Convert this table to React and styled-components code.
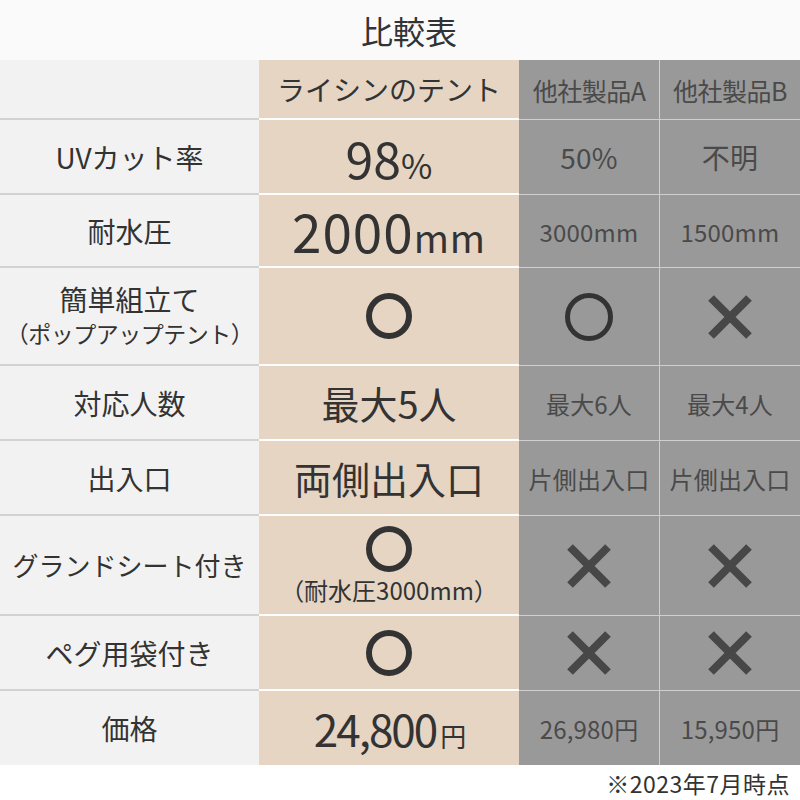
import React from 'react';
import styled, { createGlobalStyle, css } from 'styled-components';

const GlobalStyle = createGlobalStyle`
  body {
    margin: 0;
    background: #fff;
    font-family: "Noto Sans CJK JP", "Noto Sans", sans-serif;
    color: #333;
  }
`;

const rows = [
  {
    label: ['UVカット率'],
    main: { type: 'big', num: '98', unit: '%' },
    a: { type: 'text', text: '50%', size: 28 },
    b: { type: 'text', text: '不明', size: 28 },
    h: 75,
  },
  {
    label: ['耐水圧'],
    main: { type: 'big', num: '2000', unit: 'mm', wide: true },
    a: { type: 'text', text: '3000mm' },
    b: { type: 'text', text: '1500mm' },
    h: 73,
  },
  {
    label: ['簡単組立て', '（ポップアップテント）'],
    main: { type: 'circle' },
    a: { type: 'circle' },
    b: { type: 'cross' },
    h: 98,
  },
  {
    label: ['対応人数'],
    main: { type: 'text', text: '最大5人' },
    a: { type: 'text', text: '最大6人' },
    b: { type: 'text', text: '最大4人' },
    h: 75,
  },
  {
    label: ['出入口'],
    main: { type: 'text', text: '両側出入口' },
    a: { type: 'text', text: '片側出入口' },
    b: { type: 'text', text: '片側出入口' },
    h: 75,
  },
  {
    label: ['グランドシート付き'],
    main: { type: 'circle', note: '（耐水圧3000mm）' },
    a: { type: 'cross' },
    b: { type: 'cross' },
    h: 100,
    small: true,
  },
  {
    label: ['ペグ用袋付き'],
    main: { type: 'circle' },
    a: { type: 'cross' },
    b: { type: 'cross' },
    h: 75,
  },
  {
    label: ['価格'],
    main: { type: 'big', num: '24,800', unit: '円', price: true },
    a: { type: 'text', text: '26,980円' },
    b: { type: 'text', text: '15,950円' },
    h: 74,
  },
];

function Circle({ size = 46, stroke = 6 }) {
  const r = (size - stroke) / 2;
  return (
    <svg width={size} height={size} viewBox={`0 0 ${size} ${size}`}>
      <circle cx={size / 2} cy={size / 2} r={r} fill="none" stroke="#333" strokeWidth={stroke} />
    </svg>
  );
}

function Cross() {
  return (
    <svg width="46" height="46" viewBox="0 0 46 46">
      <path d="M4 4 L42 42 M42 4 L4 42" stroke="#474747" strokeWidth="8" />
    </svg>
  );
}

function MainValue({ v }) {
  if (v.type === 'circle') {
    return (
      <Stack>
        <Circle size={46} stroke={6} />
        {v.note && <Note>{v.note}</Note>}
      </Stack>
    );
  }
  if (v.type === 'big') {
    return (
      <Big $price={v.price} $wide={v.wide}>
        {v.num}
        <Unit $price={v.price} $wide={v.wide}>
          {v.unit}
        </Unit>
      </Big>
    );
  }
  return <MainText>{v.text}</MainText>;
}

function OtherValue({ v }) {
  if (v.type === 'circle') return <Circle size={48} stroke={5} />;
  if (v.type === 'cross') return <Cross />;
  return <OtherText $size={v.size}>{v.text}</OtherText>;
}

export default function App() {
  const heights = [60, ...rows.map((r) => r.h)].map((h) => `${h}px`).join(' ');
  return (
    <Page>
      <GlobalStyle />
      <Title>比較表</Title>
      <Table style={{ gridTemplateRows: heights }}>
        <Cell $col="label" />
        <Cell $col="main">
          <MainHead>ライシンのテント</MainHead>
        </Cell>
        <Cell $col="a">
          <OtherHead>他社製品A</OtherHead>
        </Cell>
        <Cell $col="b">
          <OtherHead>他社製品B</OtherHead>
        </Cell>
        {rows.map((row, i) => {
          const last = i === rows.length - 1;
          return (
            <React.Fragment key={row.label[0]}>
              <Cell $col="label" $last={last}>
                <Label $small={row.small}>
                  {row.label.map((l, j) => (
                    <LabelLine key={l} $sub={j > 0}>
                      {l}
                    </LabelLine>
                  ))}
                </Label>
              </Cell>
              <Cell $col="main" $last={last}>
                <MainValue v={row.main} />
              </Cell>
              <Cell $col="a" $last={last}>
                <OtherValue v={row.a} />
              </Cell>
              <Cell $col="b" $last={last}>
                <OtherValue v={row.b} />
              </Cell>
            </React.Fragment>
          );
        })}
      </Table>
      <Footnote>※2023年7月時点</Footnote>
    </Page>
  );
}

const Page = styled.div`
  width: 800px;
  height: 800px;
  background: #fff;
  overflow: hidden;
`;

const Title = styled.div`
  height: 60px;
  background: #fafafa;
  display: flex;
  align-items: center;
  justify-content: center;
  padding-left: 18px;
  box-sizing: border-box;
  font-size: 32px;
  color: #333;
`;

const Table = styled.div`
  display: grid;
  grid-template-columns: 259px 260px 140px 141px;
`;

const colStyles = {
  label: css`
    background: #f2f2f2;
    border-bottom: 2px solid #d2d2d2;
  `,
  main: css`
    background: #e6d5c3;
    border-bottom: 2px solid #fff;
  `,
  a: css`
    background: #999;
    border-bottom: 1px solid #cfcfcf;
  `,
  b: css`
    background: #999;
    border-bottom: 1px solid #cfcfcf;
    border-left: 1px solid #cfcfcf;
  `,
};

const Cell = styled.div`
  box-sizing: border-box;
  display: flex;
  align-items: center;
  justify-content: center;
  ${(p) => colStyles[p.$col]}
  ${(p) =>
    p.$last &&
    css`
      border-bottom: none;
    `}
`;

const Label = styled.div`
  display: flex;
  flex-direction: column;
  align-items: center;
  font-size: ${(p) => (p.$small ? '26px' : '28px')};
  color: #333;
`;

const LabelLine = styled.span`
  line-height: 34px;
  ${(p) =>
    p.$sub &&
    css`
      font-size: 23px;
      letter-spacing: -0.5px;
    `}
`;

const MainHead = styled.span`
  font-size: 28px;
  color: #333;
`;

const OtherHead = styled.span`
  font-size: 25px;
  letter-spacing: -0.5px;
  color: #4a4a4a;
`;

const Big = styled.span`
  font-size: ${(p) => (p.$price ? '44px' : p.$wide ? '53px' : '50px')};
  letter-spacing: ${(p) => (p.$price ? '-2px' : p.$wide ? '1px' : '0')};
  color: #333;
  line-height: 1;
`;

const Unit = styled.span`
  font-size: ${(p) => (p.$price ? '26px' : p.$wide ? '38px' : '34px')};
  margin-left: ${(p) => (p.$price ? '4px' : '0')};
`;

const MainText = styled.span`
  font-size: 38px;
  color: #333;
`;

const OtherText = styled.span`
  font-size: ${(p) => (p.$size ? `${p.$size}px` : '24px')};
  letter-spacing: 0.2px;
  color: #4a4a4a;
`;

const Stack = styled.div`
  display: flex;
  flex-direction: column;
  align-items: center;
  gap: 4px;
`;

const Note = styled.span`
  font-size: 24px;
  color: #333;
  line-height: 28px;
`;

const Footnote = styled.div`
  display: flex;
  justify-content: flex-end;
  padding: 1px 10px 0 0;
  font-size: 23px;
  color: #333;
  letter-spacing: 0.5px;
`;
